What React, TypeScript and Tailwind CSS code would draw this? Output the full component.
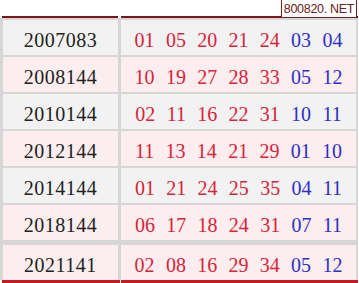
import React from "react";

const rows: { y: string; red: string[]; blue: string[]; pink: boolean }[] = [
  { y: "2007083", red: ["01", "05", "20", "21", "24"], blue: ["03", "04"], pink: false },
  { y: "2008144", red: ["10", "19", "27", "28", "33"], blue: ["05", "12"], pink: true },
  { y: "2010144", red: ["02", "11", "16", "22", "31"], blue: ["10", "11"], pink: false },
  { y: "2012144", red: ["11", "13", "14", "21", "29"], blue: ["01", "10"], pink: true },
  { y: "2014144", red: ["01", "21", "24", "25", "35"], blue: ["04", "11"], pink: false },
  { y: "2018144", red: ["06", "17", "18", "24", "31"], blue: ["07", "11"], pink: true },
  { y: "2021141", red: ["02", "08", "16", "29", "34"], blue: ["05", "12"], pink: true },
];

export default function App() {
  return (
    <div className="relative w-[359px] h-[283px] bg-white overflow-hidden font-['Liberation_Serif',serif]">
      <div className="absolute right-[2px] top-[-1px] h-[19px] w-[76px] border border-[#7a1c1c] bg-white flex items-center justify-center z-10">
        <span className="relative top-[1px] font-['Liberation_Sans',sans-serif] text-[12.5px] tracking-[-0.3px] leading-none text-[#6b2020]">
          800820. NET
        </span>
      </div>
      <div className="pt-[16px] w-[358px]">
        <div className="flex gap-[3px] pl-[2px] h-[2px]">
          <div className="w-[116px] bg-[#7f1518]" />
          <div className="flex-1 bg-[#7f1518]" />
        </div>
        <div className="bg-[#d6d6d6] pt-[2px] flex flex-col gap-[2px]">
          {rows.map((r, i) => (
            <div
              key={r.y}
              className={`flex gap-[3px] pl-[3px] pr-[2px] h-[35px] ${i === rows.length - 1 ? "mt-[3px]" : ""}`}
            >
              <div
                className={`w-[115px] flex items-center justify-center pt-[4px] text-[20px] tracking-[0.5px] text-[#222] ${
                  r.pink ? "bg-[#fcedee]" : "bg-[#f2f2f2]"
                }`}
              >
                {r.y}
              </div>
              <div
                className={`flex-1 flex items-center justify-center gap-[11.3px] pt-[4px] text-[20px] ${
                  r.pink ? "bg-[#fcedee]" : "bg-[#f2f2f2]"
                }`}
              >
                {r.red.map((n, k) => (
                  <span key={"r" + k} className="text-[#d6243a]">
                    {n}
                  </span>
                ))}
                {r.blue.map((n, k) => (
                  <span key={"b" + k} className="text-[#2f2fc6]">
                    {n}
                  </span>
                ))}
              </div>
            </div>
          ))}
        </div>
        <div className="flex gap-[1px] pl-[2px] h-[3px]">
          <div className="w-[118px] bg-[#c41a26]" />
          <div className="flex-1 bg-[#c41a26]" />
        </div>
      </div>
    </div>
  );
}
